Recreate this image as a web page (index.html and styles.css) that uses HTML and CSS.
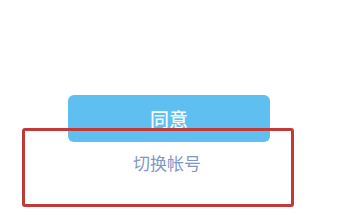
FILE: index.html
```html
<!DOCTYPE html>
<html lang="zh-CN">
<head>
  <meta charset="UTF-8">
  <meta name="viewport" content="width=device-width, initial-scale=1.0">
  <title>同意</title>
  <link rel="stylesheet" href="styles.css">
</head>
<body>
  <div class="page">
    <button class="agree">同意</button>
    <div class="switch">切换帐号</div>
    <div class="mark"></div>
  </div>
</body>
</html>
```

FILE: styles.css
```css
body {
  margin: 0;
  padding: 0;
  background-color: #fff;
  font-family: "Noto Sans CJK SC", "Noto Sans", sans-serif;
}

.page {
  position: relative;
  width: 345px;
  height: 219px;
  padding-top: 95px;
  box-sizing: border-box;
}

.agree {
  display: block;
  width: 202px;
  height: 47px;
  margin: 0 0 0 68px;
  padding: 0;
  border: none;
  border-radius: 6px;
  background-color: #5ebff0;
  color: #f4fbff;
  font-family: inherit;
  font-size: 19px;
  font-weight: 500;
  line-height: 47px;
}

.switch {
  width: 202px;
  margin: 10px 0 0 66px;
  text-align: center;
  font-size: 17px;
  line-height: 22px;
  color: #7f97c9;
}

.mark {
  position: absolute;
  left: 22px;
  top: 128px;
  width: 272px;
  height: 79px;
  box-sizing: border-box;
  border: 3px solid #c23a35;
  border-radius: 3px;
}
```
